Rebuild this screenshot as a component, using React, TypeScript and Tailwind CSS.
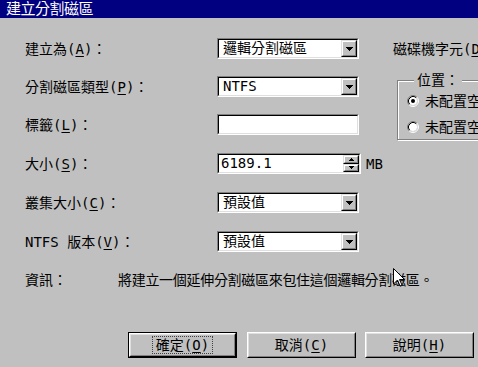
import React from "react";

const FONT = '"DejaVu Sans Mono", "Noto Sans CJK TC", monospace';

function Sunken({ className = "", children }: { className?: string; children?: React.ReactNode }) {
  return (
    <div className={`border border-t-[#808080] border-l-[#808080] border-b-white border-r-white ${className}`}>
      <div className="h-full border border-t-black border-l-black border-b-[#dfdfdf] border-r-[#dfdfdf] bg-white flex items-center">
        {children}
      </div>
    </div>
  );
}

function Raised({ className = "", children }: { className?: string; children?: React.ReactNode }) {
  return (
    <div className={`border border-t-[#dfdfdf] border-l-[#dfdfdf] border-b-black border-r-black bg-[#c0c0c0] ${className}`}>
      <div className="h-full border border-t-white border-l-white border-b-[#808080] border-r-[#808080] flex items-center justify-center">
        {children}
      </div>
    </div>
  );
}

function DownArrow() {
  return (
    <svg width="7" height="4" viewBox="0 0 7 4" shapeRendering="crispEdges">
      <rect x="0" y="0" width="7" height="1" fill="#000" />
      <rect x="1" y="1" width="5" height="1" fill="#000" />
      <rect x="2" y="2" width="3" height="1" fill="#000" />
      <rect x="3" y="3" width="1" height="1" fill="#000" />
    </svg>
  );
}

function UpArrowSmall() {
  return (
    <svg width="5" height="3" viewBox="0 0 5 3" shapeRendering="crispEdges">
      <rect x="2" y="0" width="1" height="1" fill="#000" />
      <rect x="1" y="1" width="3" height="1" fill="#000" />
      <rect x="0" y="2" width="5" height="1" fill="#000" />
    </svg>
  );
}

function DownArrowSmall() {
  return (
    <svg width="5" height="3" viewBox="0 0 5 3" shapeRendering="crispEdges">
      <rect x="0" y="0" width="5" height="1" fill="#000" />
      <rect x="1" y="1" width="3" height="1" fill="#000" />
      <rect x="2" y="2" width="1" height="1" fill="#000" />
    </svg>
  );
}

function Combo({ value }: { value: string }) {
  return (
    <Sunken className="w-[142px] h-[21px]">
      <span className="flex-1 pl-[4px] leading-[17px] whitespace-nowrap overflow-hidden">{value}</span>
      <Raised className="w-[16px] h-full">
        <DownArrow />
      </Raised>
    </Sunken>
  );
}

function Radio({ checked }: { checked?: boolean }) {
  return (
    <svg width="12" height="12" viewBox="0 0 12 12">
      <path d="M2.11 9.89 A5.5 5.5 0 0 1 9.89 2.11" stroke="#808080" strokeWidth="1" fill="none" />
      <path d="M9.89 2.11 A5.5 5.5 0 0 1 2.11 9.89" stroke="#ffffff" strokeWidth="1" fill="none" />
      <circle cx="6" cy="6" r="4" fill="#fff" />
      <path d="M2.82 9.18 A4.5 4.5 0 0 1 9.18 2.82" stroke="#000" strokeWidth="1" fill="none" />
      <path d="M9.18 2.82 A4.5 4.5 0 0 1 2.82 9.18" stroke="#dfdfdf" strokeWidth="1" fill="none" />
      {checked && <circle cx="6" cy="6" r="2" fill="#000" />}
    </svg>
  );
}

function Acc({ children }: { children: React.ReactNode }) {
  return <span className="underline underline-offset-2">{children}</span>;
}

function Row({ label, children, className = "" }: { label: React.ReactNode; children: React.ReactNode; className?: string }) {
  return (
    <div className={`flex items-center h-[21px] ${className}`}>
      <div className="w-[217px] pl-[25px] whitespace-nowrap leading-[16px]">{label}</div>
      {children}
    </div>
  );
}

function Button({ children, isDefault }: { children: React.ReactNode; isDefault?: boolean }) {
  const inner = (
    <div className="h-full border border-t-white border-l-white border-b-black border-r-black bg-[#c0c0c0]">
      <div className="h-full border border-t-[#dfdfdf] border-l-[#dfdfdf] border-b-[#808080] border-r-[#808080] flex items-center justify-center">
        {isDefault ? (
          <span className="border border-dotted border-[#404040] px-[3px] leading-[16px]">{children}</span>
        ) : (
          <span className="leading-[16px]">{children}</span>
        )}
      </div>
    </div>
  );
  return (
    <div className={`w-[109px] h-[26px] ${isDefault ? "border border-black" : ""}`}>{inner}</div>
  );
}

export default function App() {
  return (
    <div
      className="relative w-[478px] h-[367px] overflow-hidden bg-[#c0c0c0] text-black text-[14px]"
      style={{ fontFamily: FONT }}
    >
      <div className="h-[18px] bg-[#000080] text-white text-[15px] pl-[6px] leading-[18px] whitespace-nowrap tracking-[-0.5px]">建立分割磁區</div>

      <div className="flex pt-[20px]">
        <div className="w-[393px] shrink-0 flex flex-col">
          <Row label={<>建立為(<Acc>A</Acc>)：</>}>
            <Combo value="邏輯分割磁區" />
          </Row>
          <Row className="mt-[17px]" label={<>分割磁區類型(<Acc>P</Acc>)：</>}>
            <Combo value="NTFS" />
          </Row>
          <Row className="mt-[17px]" label={<>標籤(<Acc>L</Acc>)：</>}>
            <Sunken className="w-[142px] h-[21px]" />
          </Row>
          <Row className="mt-[18px]" label={<>大小(<Acc>S</Acc>)：</>}>
            <Sunken className="w-[144px] h-[21px]">
              <span className="flex-1 pl-[2px] leading-[17px] whitespace-nowrap">6189.1</span>
              <div className="w-[16px] h-full flex flex-col">
                <Raised className="h-1/2">
                  <UpArrowSmall />
                </Raised>
                <Raised className="h-1/2">
                  <DownArrowSmall />
                </Raised>
              </div>
            </Sunken>
            <span className="ml-[5px] leading-[16px]">MB</span>
          </Row>
          <Row className="mt-[18px]" label={<>叢集大小(<Acc>C</Acc>)：</>}>
            <Combo value="預設值" />
          </Row>
          <Row className="mt-[18px]" label={<>NTFS 版本(<Acc>V</Acc>)：</>}>
            <Combo value="預設值" />
          </Row>
        </div>

        <div className="flex flex-col">
          <div className="h-[21px] flex items-center whitespace-nowrap leading-[16px]">
            磁碟機字元(<Acc>D</Acc>)：
          </div>
          <div className="relative ml-[4px] mt-[21px] w-[120px] h-[60px] border border-[#808080] shadow-[inset_1px_1px_0_#fff,1px_1px_0_#fff]">
            <span className="absolute left-[16px] top-[-9px] px-[3px] bg-[#c0c0c0] leading-[16px] whitespace-nowrap">位置：</span>
            <div className="flex flex-col pl-[9px] pt-[12px]">
              <div className="flex items-center h-[16px] whitespace-nowrap">
                <Radio checked />
                <span className="ml-[6px] leading-[16px]">未配置空間</span>
              </div>
              <div className="flex items-center h-[16px] mt-[10px] whitespace-nowrap">
                <Radio />
                <span className="ml-[6px] leading-[16px]">未配置空間</span>
              </div>
            </div>
          </div>
        </div>
      </div>

      <div className="flex items-center h-[20px] mt-[18px]">
        <div className="w-[118px] pl-[25px] leading-[16px]">資訊：</div>
        <div className="leading-[16px] whitespace-nowrap tracking-[-0.3px]">將建立一個延伸分割磁區來包住這個邏輯分割磁區。</div>
      </div>

      <div className="flex mt-[42px] pl-[128px]">
        <div className="mr-[10px]">
          <Button isDefault>
            確定(<Acc>O</Acc>)
          </Button>
        </div>
        <div className="mr-[9px]">
          <Button>
            取消(<Acc>C</Acc>)
          </Button>
        </div>
        <Button>
          說明(<Acc>H</Acc>)
        </Button>
      </div>

      <svg className="absolute left-[393px] top-[268px]" width="12" height="19" viewBox="0 0 12 19">
        <path d="M0.5 0.5 L0.5 16 L4.5 12 L7 18 L9 17 L6.5 11.5 L11.5 11.5 Z" fill="#fff" stroke="#000" strokeWidth="1" />
      </svg>
    </div>
  );
}
